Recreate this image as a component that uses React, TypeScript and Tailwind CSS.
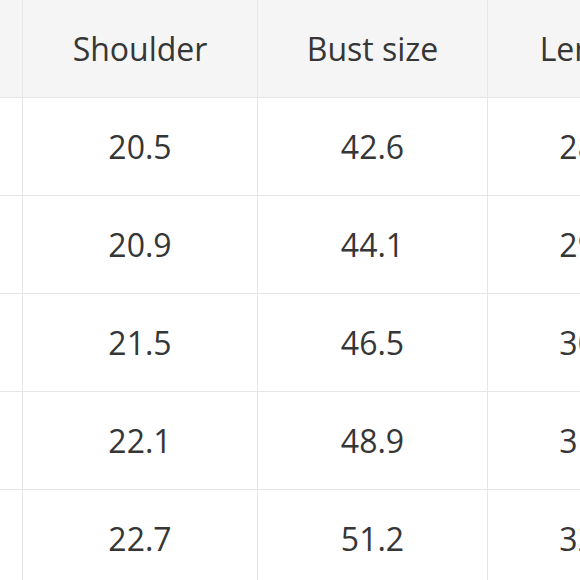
const rows = [
  { shoulder: '20.5', bust: '42.6', length: '28.3' },
  { shoulder: '20.9', bust: '44.1', length: '29.1' },
  { shoulder: '21.5', bust: '46.5', length: '30.3' },
  { shoulder: '22.1', bust: '48.9', length: '31.5' },
  { shoulder: '22.7', bust: '51.2', length: '32.7' },
]

const cell = 'flex items-center justify-center border-r border-b border-[#e6e6e6] whitespace-nowrap'

export default function App() {
  return (
    <div className="w-[580px] h-[580px] overflow-hidden bg-white text-[32px] text-[#363636] font-['Open_Sans',sans-serif]">
      <div className="grid grid-cols-[23px_235px_230px_207px] w-max">
        <div className={`${cell} h-[98px] bg-[#f5f5f5]`}></div>
        <div className={`${cell} h-[98px] bg-[#f5f5f5]`}>Shoulder</div>
        <div className={`${cell} h-[98px] bg-[#f5f5f5]`}>Bust size</div>
        <div className={`${cell} h-[98px] bg-[#f5f5f5]`}>Length</div>
        {rows.map(row => (
          <div key={row.shoulder} className="contents">
            <div className={`${cell} h-[98px]`}></div>
            <div className={`${cell} h-[98px]`}>{row.shoulder}</div>
            <div className={`${cell} h-[98px]`}>{row.bust}</div>
            <div className={`${cell} h-[98px]`}>{row.length}</div>
          </div>
        ))}
      </div>
    </div>
  )
}
